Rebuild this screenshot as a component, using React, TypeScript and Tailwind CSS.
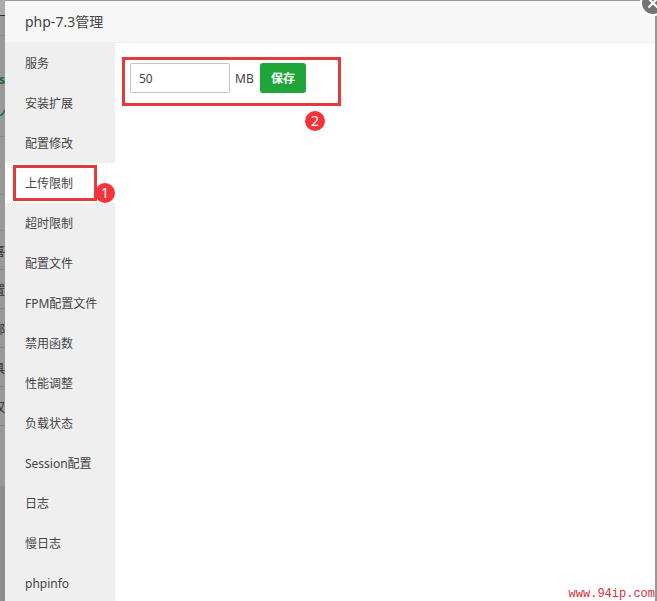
import { useState } from 'react';

type MenuItem = {
    id: string;
    label: string;
};

const menuItems: MenuItem[] = [
    { id: 'service', label: '服务' },
    { id: 'extensions', label: '安装扩展' },
    { id: 'config', label: '配置修改' },
    { id: 'upload', label: '上传限制' },
    { id: 'timeout', label: '超时限制' },
    { id: 'file', label: '配置文件' },
    { id: 'fpm', label: 'FPM配置文件' },
    { id: 'functions', label: '禁用函数' },
    { id: 'performance', label: '性能调整' },
    { id: 'load', label: '负载状态' },
    { id: 'session', label: 'Session配置' },
    { id: 'log', label: '日志' },
    { id: 'slowlog', label: '慢日志' },
    { id: 'phpinfo', label: 'phpinfo' },
];

const backdropRows = ['喜', '置', '部', '具', '汉'];

const Badge = ({ value }: { value: number }) => (
    <span className="flex size-5 items-center justify-center rounded-full bg-[#f8323a] text-sm text-white">
        {value}
    </span>
);

// Sliver of the dimmed page to the left of the dialog
const Backdrop = () => (
    <div aria-hidden="true" className="flex w-[5px] shrink-0 flex-col overflow-hidden text-xs text-[#333]">
        <div className="h-4 border-b border-[#333] bg-[#aaa]" />
        <div className="h-5 border-b border-[#8c8c8c]" />
        <div className="flex h-[101px] flex-col items-end border-b border-[#8c8c8c] pt-9 text-[#1c6b2c]">
            <span className="font-bold">s</span>
            <svg className="mt-4 shrink-0" width="5" height="14" viewBox="0 0 5 14" fill="none">
                <path d="M0 11.5C2 11 3.8 9 5 5.5" stroke="#1c7a34" strokeWidth="1.8" />
            </svg>
        </div>
        <div className="h-[58px] border-b border-[#8c8c8c]" />
        <div className="h-9 border-b border-[#8c8c8c]" />
        {backdropRows.map((text) => (
            <div key={text} className="flex h-[39px] items-center justify-end border-b border-[#858585] pt-1">
                <span className="shrink-0">{text}</span>
            </div>
        ))}
        <div className="h-[60px]" />
        <div className="flex-1 bg-[#8e8e8e]" />
    </div>
);

const SideMenu = ({ active, onSelect }: { active: string; onSelect: (id: string) => void }) => (
    <nav className="w-[110px] shrink-0 bg-[#efefef]">
        {menuItems.map((item) => (
            <div key={item.id} className="relative">
                <button
                    type="button"
                    onClick={() => onSelect(item.id)}
                    className={`block h-10 w-full whitespace-nowrap pt-0.5 pl-5 text-left ${
                        item.id === active ? 'bg-white' : ''
                    }`}
                >
                    {item.label}
                </button>
                {item.id === 'upload' && (
                    <>
                        <div className="pointer-events-none absolute top-0.5 left-2 h-9 w-[84px] border-3 border-[#e13c3c]" />
                        <div className="absolute top-5 right-0">
                            <Badge value={1} />
                        </div>
                    </>
                )}
            </div>
        ))}
    </nav>
);

const UploadLimit = () => {
    const [size, setSize] = useState('50');

    return (
        <form className="px-[7px] pt-3.5" onSubmit={(e) => e.preventDefault()}>
            <div className="flex w-[219px] items-center gap-[5px] border-3 border-[#e13c3c] px-[5px] pt-[3px] pb-2.5">
                <input
                    id="upload-size"
                    type="text"
                    value={size}
                    onChange={(e) => setSize(e.target.value)}
                    className="h-[30px] w-[100px] rounded-xs border border-[#c4c4c4] bg-white px-2 outline-none"
                />
                <label htmlFor="upload-size" className="min-w-5 pt-0.5">
                    MB
                </label>
                <button
                    type="submit"
                    className="h-[30px] w-[46px] rounded-[3px] bg-[#20a53a] pt-0.5 font-bold text-white"
                >
                    保存
                </button>
            </div>
            <div className="flex w-[203px] justify-end pt-[5px]">
                <Badge value={2} />
            </div>
        </form>
    );
};

const App = () => {
    const [active, setActive] = useState('upload');

    return (
        <div className="relative flex h-screen overflow-hidden bg-[#999] font-['Noto_Sans','Noto_Sans_CJK_SC',sans-serif] text-xs text-[#444]">
            <Backdrop />

            {/* Dialog */}
            <section className="mt-px mr-0.5 flex min-w-0 flex-1 flex-col bg-white">
                <header className="flex h-[42px] shrink-0 items-center border-b border-[#eee] bg-[#f7f7f7] pl-5">
                    <h1 className="text-sm">php-7.3管理</h1>
                </header>
                <div className="flex flex-1">
                    <SideMenu active={active} onSelect={setActive} />
                    <main className="min-w-0 flex-1">
                        <UploadLimit />
                    </main>
                </div>
            </section>

            {/* Close */}
            <button type="button" aria-label="关闭" className="absolute -top-2.5 -right-2.5">
                <svg className="block" width="28" height="28" viewBox="0 0 28 28" fill="none">
                    <circle cx="14" cy="13" r="13" fill="#fff" />
                    <circle cx="14" cy="13" r="11" fill="#747474" />
                    <path d="M9.5 8.5l9 9M18.5 8.5l-9 9" stroke="#fff" strokeWidth="2.2" />
                </svg>
            </button>

            <span className="absolute right-0.5 bottom-0 font-['Liberation_Mono',monospace] text-xs leading-3.5 text-[#d9303a]">
                www.94ip.com
            </span>
        </div>
    );
};

export default App;
